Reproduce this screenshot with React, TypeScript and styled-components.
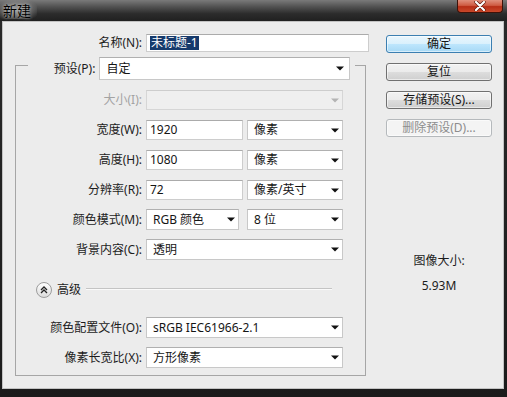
import React from 'react'
import styled, { createGlobalStyle } from 'styled-components'

const GlobalStyle = createGlobalStyle`
  html, body {
    margin: 0;
    padding: 0;
    background: #1f1f1f;
  }
  body {
    font-family: "Noto Sans", "Noto Sans CJK SC", sans-serif;
    font-size: 12px;
  }
`

const Window = styled.div`
  width: 507px;
  height: 397px;
  display: flex;
  flex-direction: column;
  background: linear-gradient(#2a2a2a, #1b1b1b);
  overflow: hidden;
`
const TitleBar = styled.div`
  height: 21px;
  flex: none;
  display: flex;
  justify-content: space-between;
  align-items: flex-start;
  background: linear-gradient(#7a7a7a 0%, #545454 30%, #2c2c2c 65%, #202020 100%);
`
const TitleText = styled.div`
  padding: 2px 6px 0 3px;
  font-size: 14px;
  line-height: 17px;
  color: #000;
  background: radial-gradient(ellipse at 45% 55%, rgba(190, 190, 190, 0.75) 0%, rgba(150, 150, 150, 0.35) 55%, rgba(120, 120, 120, 0) 80%);
  text-shadow: 0 0 3px rgba(210, 210, 210, 0.9);
`
const CloseButton = styled.div`
  width: 46px;
  height: 13px;
  margin-right: 4px;
  box-sizing: border-box;
  border: 1px solid #3e1209;
  border-top: none;
  border-radius: 0 0 4px 4px;
  background: linear-gradient(#e0907d 0%, #cf5c43 45%, #b72e16 55%, #c9482a 100%);
  display: flex;
  align-items: center;
  justify-content: center;
`
const Frame = styled.div`
  flex: 1;
  padding: 0 3px 8px 2px;
  display: flex;
`
const Client = styled.div`
  width: 502px;
  height: 368px;
  box-sizing: border-box;
  border: 1px solid #c2c2c2;
  background: #ececec;
  display: flex;
`
const LeftPane = styled.div`
  width: 366px;
  flex: none;
  display: flex;
  flex-direction: column;
`
const RightPane = styled.div`
  width: 106px;
  margin-left: 17px;
  padding-top: 13px;
  display: flex;
  flex-direction: column;
  gap: 10px;
`
const FieldRow = styled.div<{ $top: number; $h?: number }>`
  display: flex;
  align-items: center;
  height: ${p => p.$h || 20}px;
  margin-top: ${p => p.$top}px;
`
const Label = styled.div<{ $w: number; $disabled?: boolean }>`
  width: ${p => p.$w}px;
  flex: none;
  box-sizing: border-box;
  padding-right: 4px;
  text-align: right;
  white-space: nowrap;
  line-height: 16px;
  color: ${p => (p.$disabled ? '#a3a3a3' : '#1c1c1c')};
`
const TextBox = styled.div<{ $w: number }>`
  width: ${p => p.$w}px;
  height: 100%;
  box-sizing: border-box;
  background: #fff;
  border: 1px solid #cdcdcd;
  border-top-color: #ababab;
  padding-left: 3px;
  display: flex;
  align-items: center;
  color: #151515;
  line-height: 16px;
`
const Selected = styled.span`
  background: #163a6c;
  color: #fff;
  padding: 0 1px;
  line-height: 14px;
`
const Select = styled.div<{ $w: number; $disabled?: boolean; $pad?: number }>`
  width: ${p => p.$w}px;
  height: 100%;
  flex: none;
  box-sizing: border-box;
  background: ${p => (p.$disabled ? '#efefef' : '#fff')};
  border: 1px solid ${p => (p.$disabled ? '#d6d6d6' : '#c8c8c8')};
  border-top-color: ${p => (p.$disabled ? '#cdcdcd' : '#b0b0b0')};
  padding: 0 ${p => p.$pad || 3}px 0 6px;
  display: flex;
  align-items: center;
  justify-content: space-between;
  color: #151515;
  line-height: 16px;
  white-space: nowrap;
`
const GroupHeader = styled.div`
  height: 23px;
  margin-top: 5px;
  margin-left: 12px;
  width: 351px;
  display: flex;
  align-items: stretch;
`
const CornerLeft = styled.div`
  width: 14px;
  margin-top: 8px;
  box-sizing: border-box;
  border-top: 1px solid #a6a6a6;
  border-left: 1px solid #a6a6a6;
`
const CornerRight = styled.div`
  width: 11px;
  margin-top: 8px;
  margin-left: 5px;
  box-sizing: border-box;
  border-top: 1px solid #a6a6a6;
  border-right: 1px solid #a6a6a6;
`
const Legend = styled.div`
  display: flex;
  align-items: center;
`
const GroupBody = styled.div`
  margin-left: 12px;
  width: 351px;
  height: 296px;
  box-sizing: border-box;
  border: 1px solid #a6a6a6;
  border-top: none;
  display: flex;
  flex-direction: column;
`
const Gap = styled.div<{ $w: number }>`
  width: ${p => p.$w}px;
  flex: none;
`
const AdvancedRow = styled.div`
  display: flex;
  align-items: center;
  height: 16px;
  margin-top: 22px;
  padding-left: 20px;
`
const ToggleCircle = styled.div`
  width: 16px;
  height: 16px;
  box-sizing: border-box;
  border-radius: 50%;
  border: 1px solid #9c9c9c;
  background: linear-gradient(#fefefe, #dcdcdc);
  display: flex;
  align-items: center;
  justify-content: center;
`
const AdvancedText = styled.div`
  margin-left: 5px;
  color: #1c1c1c;
  line-height: 16px;
`
const Rule = styled.div`
  width: 246px;
  height: 1px;
  margin-left: 5px;
  margin-top: -3px;
  background: #c4c4c4;
  box-shadow: 0 1px 0 #fafafa;
`
const Button = styled.div<{ $variant?: 'primary' | 'disabled' }>`
  height: 18px;
  box-sizing: border-box;
  border-radius: 3px;
  display: flex;
  align-items: center;
  justify-content: center;
  line-height: 16px;
  border: 1px solid ${p => (p.$variant === 'primary' ? '#3c7fb1' : p.$variant === 'disabled' ? '#b5b9bc' : '#707070')};
  color: ${p => (p.$variant === 'disabled' ? '#8d8d8d' : '#151515')};
  background: ${p =>
    p.$variant === 'primary'
      ? 'linear-gradient(#eaf6fd 0%, #d9f0fc 50%, #bee6fd 50%, #a7d9f5 100%)'
      : p.$variant === 'disabled'
        ? '#f4f4f4'
        : 'linear-gradient(#f2f2f2 0%, #ebebeb 50%, #dddddd 50%, #cfcfcf 100%)'};
  box-shadow: inset 0 0 0 1px rgba(255, 255, 255, 0.55);
`
const Info = styled.div`
  margin-top: 106px;
  display: flex;
  flex-direction: column;
  align-items: center;
  gap: 9px;
  color: #1c1c1c;
  line-height: 16px;
`

const Arrow = ({ disabled }: { disabled?: boolean }) => (
  <svg width="8" height="5" viewBox="0 0 8 5">
    <polygon points="0,0.5 8,0.5 4,4.5" fill={disabled ? '#b4b4b4' : '#111'} />
  </svg>
)

type Field = {
  label: string
  value: string
  unit?: string
}

const SIZE_FIELDS: Field[] = [
  { label: '宽度(W):', value: '1920', unit: '像素' },
  { label: '高度(H):', value: '1080', unit: '像素' },
  { label: '分辨率(R):', value: '72', unit: '像素/英寸' },
]

const App = () => (
  <Window>
    <GlobalStyle />
    <TitleBar>
      <TitleText>新建</TitleText>
      <CloseButton>
        <svg width="12" height="10" viewBox="0 0 12 10">
          <path d="M2 1 L10 9 M10 1 L2 9" stroke="#5a1508" strokeWidth="3.4" strokeLinecap="round" />
          <path d="M2 1 L10 9 M10 1 L2 9" stroke="#fff" strokeWidth="2.2" strokeLinecap="round" />
        </svg>
      </CloseButton>
    </TitleBar>
    <Frame>
      <Client>
        <LeftPane>
          <FieldRow $top={12} $h={18}>
            <Label $w={143}>名称(N):</Label>
            <TextBox $w={223}>
              <Selected>未标题-1</Selected>
            </TextBox>
          </FieldRow>

          <GroupHeader>
            <CornerLeft />
            <Legend>
              <Label $w={71}>预设(P):</Label>
              <Select $w={251} $pad={5}>
                <span>自定</span>
                <Arrow />
              </Select>
            </Legend>
            <CornerRight />
          </GroupHeader>

          <GroupBody>
            <FieldRow $top={10}>
              <Label $w={130} $disabled>大小(I):</Label>
              <Select $w={197} $disabled>
                <span />
                <Arrow disabled />
              </Select>
            </FieldRow>
            {SIZE_FIELDS.map(f => (
              <FieldRow key={f.label} $top={10}>
                <Label $w={130}>{f.label}</Label>
                <TextBox $w={97}>{f.value}</TextBox>
                <Gap $w={4} />
                <Select $w={96}>
                  <span>{f.unit}</span>
                  <Arrow />
                </Select>
              </FieldRow>
            ))}
            <FieldRow $top={9} $h={21}>
              <Label $w={130}>颜色模式(M):</Label>
              <Select $w={93}>
                <span>RGB 颜色</span>
                <Arrow />
              </Select>
              <Gap $w={8} />
              <Select $w={96}>
                <span>8 位</span>
                <Arrow />
              </Select>
            </FieldRow>
            <FieldRow $top={9} $h={21}>
              <Label $w={130}>背景内容(C):</Label>
              <Select $w={197}>
                <span>透明</span>
                <Arrow />
              </Select>
            </FieldRow>

            <AdvancedRow>
              <ToggleCircle>
                <svg width="8" height="8" viewBox="0 0 8 8">
                  <path d="M1 4 L4 1 L7 4 M1 7 L4 4 L7 7" stroke="#222" strokeWidth="1.3" fill="none" />
                </svg>
              </ToggleCircle>
              <AdvancedText>高级</AdvancedText>
              <Rule />
            </AdvancedRow>

            <FieldRow $top={19} $h={21}>
              <Label $w={130}>颜色配置文件(O):</Label>
              <Select $w={197}>
                <span>sRGB IEC61966-2.1</span>
                <Arrow />
              </Select>
            </FieldRow>
            <FieldRow $top={9} $h={21}>
              <Label $w={130}>像素长宽比(X):</Label>
              <Select $w={197}>
                <span>方形像素</span>
                <Arrow />
              </Select>
            </FieldRow>
          </GroupBody>
        </LeftPane>

        <RightPane>
          <Button $variant="primary">确定</Button>
          <Button>复位</Button>
          <Button>存储预设(S)...</Button>
          <Button $variant="disabled">删除预设(D)...</Button>
          <Info>
            <div>图像大小:</div>
            <div>5.93M</div>
          </Info>
        </RightPane>
      </Client>
    </Frame>
  </Window>
)

export default App
